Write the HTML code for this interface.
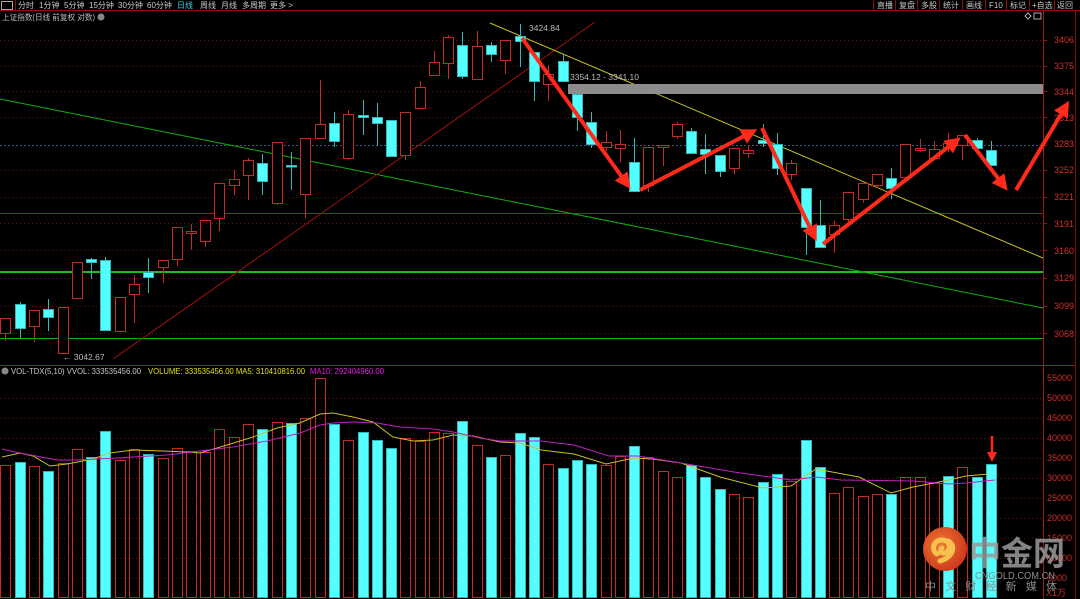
<!DOCTYPE html>
<html><head><meta charset="utf-8"><style>
html,body{margin:0;padding:0;background:#000;width:1080px;height:599px;overflow:hidden;font-family:"Liberation Sans","Noto Sans CJK SC",sans-serif}
svg{position:absolute;left:0;top:0}
</style></head><body>
<svg width="1080" height="599" viewBox="0 0 1080 599" xmlns="http://www.w3.org/2000/svg" font-family="Liberation Sans, Noto Sans CJK SC, sans-serif">
<rect width="1080" height="599" fill="#000"/>
<!-- toolbar -->
<line x1="0" y1="10.5" x2="1080" y2="10.5" stroke="#8a1010"/>
<rect x="1.5" y="1.5" width="11" height="8" fill="none" stroke="#aaa"/>
<line x1="15.5" y1="0" x2="15.5" y2="10" stroke="#8a1010"/>
<g font-size="8" fill="#c8c8c8">
<text x="18" y="8">分时</text><text x="39" y="8">1分钟</text><text x="64" y="8">5分钟</text><text x="89" y="8">15分钟</text><text x="118" y="8">30分钟</text><text x="147" y="8">60分钟</text><text x="177" y="8" fill="#40d0e0">日线</text><text x="200" y="8">周线</text><text x="221" y="8">月线</text><text x="242" y="8">多周期</text><text x="270" y="8">更多 &gt;</text>
<text x="877" y="8">直播</text><text x="899" y="8">复盘</text><text x="921" y="8">多股</text><text x="943" y="8">统计</text><text x="966" y="8">画线</text><text x="989" y="8">F10</text><text x="1010" y="8">标记</text><text x="1032" y="8">+自选</text><text x="1057" y="8">返回</text>
</g>
<g stroke="#8a1010"><line x1="873.5" y1="0" x2="873.5" y2="10"/><line x1="895.5" y1="0" x2="895.5" y2="10"/><line x1="917.5" y1="0" x2="917.5" y2="10"/><line x1="939.5" y1="0" x2="939.5" y2="10"/><line x1="962.5" y1="0" x2="962.5" y2="10"/><line x1="985.5" y1="0" x2="985.5" y2="10"/><line x1="1006.5" y1="0" x2="1006.5" y2="10"/><line x1="1029.5" y1="0" x2="1029.5" y2="10"/><line x1="1054.5" y1="0" x2="1054.5" y2="10"/></g>
<text x="2" y="20" font-size="8" fill="#bbb" textLength="93" lengthAdjust="spacingAndGlyphs">上证指数(日线 前复权 对数)</text>
<circle cx="101" cy="17" r="3.5" fill="#888"/>
<path d="M1025 16 l3 -3 l3 3 l-3 3z" fill="none" stroke="#aaa"/><rect x="1034" y="13" width="7" height="6" fill="none" stroke="#aaa"/>
<!-- axis lines -->
<line x1="1043.5" y1="11" x2="1043.5" y2="599" stroke="#a01818"/>
<line x1="1075.5" y1="11" x2="1075.5" y2="599" stroke="#7a1010"/>
<line x1="0" y1="365.5" x2="1075" y2="365.5" stroke="#a01818"/>
<!-- price grid -->
<g stroke="#5a1010" stroke-dasharray="1,3">
<line x1="0" y1="40.5" x2="1043" y2="40.5"/><line x1="0" y1="66.5" x2="1043" y2="66.5"/><line x1="0" y1="91.5" x2="1043" y2="91.5"/><line x1="0" y1="117.5" x2="1043" y2="117.5"/><line x1="0" y1="170.5" x2="1043" y2="170.5"/><line x1="0" y1="197.5" x2="1043" y2="197.5"/><line x1="0" y1="223.5" x2="1043" y2="223.5"/><line x1="0" y1="250.5" x2="1043" y2="250.5"/><line x1="0" y1="278.5" x2="1043" y2="278.5"/><line x1="0" y1="306.5" x2="1043" y2="306.5"/><line x1="0" y1="333.5" x2="1043" y2="333.5"/>
<line x1="0" y1="398.5" x2="1043" y2="398.5"/><line x1="0" y1="418.5" x2="1043" y2="418.5"/><line x1="0" y1="438.5" x2="1043" y2="438.5"/><line x1="0" y1="458.5" x2="1043" y2="458.5"/><line x1="0" y1="478.5" x2="1043" y2="478.5"/><line x1="0" y1="498.5" x2="1043" y2="498.5"/><line x1="0" y1="518.5" x2="1043" y2="518.5"/><line x1="0" y1="538.5" x2="1043" y2="538.5"/><line x1="0" y1="558.5" x2="1043" y2="558.5"/><line x1="0" y1="578.5" x2="1043" y2="578.5"/>
</g>
<line x1="0" y1="145.5" x2="1043" y2="145.5" stroke="#3a5a7a" stroke-dasharray="2,2"/>
<line x1="0" y1="213.5" x2="1043" y2="213.5" stroke="#a01818"/>
<line x1="0" y1="272" x2="1043" y2="272" stroke="#20ff20" stroke-width="1.6"/>
<line x1="0" y1="338.5" x2="1043" y2="338.5" stroke="#10b010"/>
<!-- axis labels -->
<g font-size="9" fill="#d03030">
<text x="1054" y="43">3406</text><text x="1054" y="69">3375</text><text x="1054" y="95">3344</text><text x="1054" y="121">3313</text><text x="1054" y="147">3283</text><text x="1054" y="173">3252</text><text x="1054" y="200">3221</text><text x="1054" y="227">3191</text><text x="1054" y="254">3160</text><text x="1054" y="281">3129</text><text x="1054" y="309">3099</text><text x="1054" y="337">3068</text>
<text x="1047" y="381">55000</text><text x="1047" y="401">50000</text><text x="1047" y="421">45000</text><text x="1047" y="441">40000</text><text x="1047" y="461">35000</text><text x="1047" y="481">30000</text><text x="1047" y="501">25000</text><text x="1047" y="521">20000</text><text x="1047" y="541">15000</text><text x="1047" y="561">10000</text><text x="1047" y="581">5000</text>
<text x="1046" y="596">X1万</text>
</g>
<g stroke="#a01818"><line x1="1043" y1="40.5" x2="1047" y2="40.5"/><line x1="1043" y1="66.5" x2="1047" y2="66.5"/><line x1="1043" y1="91.5" x2="1047" y2="91.5"/><line x1="1043" y1="117.5" x2="1047" y2="117.5"/><line x1="1043" y1="145.5" x2="1047" y2="145.5"/><line x1="1043" y1="170.5" x2="1047" y2="170.5"/><line x1="1043" y1="197.5" x2="1047" y2="197.5"/><line x1="1043" y1="223.5" x2="1047" y2="223.5"/><line x1="1043" y1="250.5" x2="1047" y2="250.5"/><line x1="1043" y1="278.5" x2="1047" y2="278.5"/><line x1="1043" y1="306.5" x2="1047" y2="306.5"/><line x1="1043" y1="333.5" x2="1047" y2="333.5"/></g>
<!-- trend lines -->
<line x1="0" y1="99" x2="1043" y2="308" stroke="#10b010"/>
<line x1="113" y1="359" x2="595" y2="22" stroke="#a01010"/>
<line x1="490" y1="23" x2="1043" y2="258" stroke="#c8c020"/>
<rect x="568" y="84" width="475" height="10" fill="#8c8c8c"/>
<g font-size="8.5" fill="#bbb"><text x="570" y="80">3354.12 - 3341.10</text><text x="529" y="31">3424.84</text><text x="63" y="360">← 3042.67</text></g>
<!-- candles -->
<g stroke-width="1">
<g stroke="#c82828" fill="#000">
<line x1="5.5" y1="318" x2="5.5" y2="341"/><rect x="0.5" y="318.5" width="10" height="15"/>
<line x1="34.5" y1="310" x2="34.5" y2="342"/><rect x="29.5" y="310.5" width="10" height="16"/>
<line x1="63.5" y1="307" x2="63.5" y2="353"/><rect x="58.5" y="307.5" width="10" height="46"/>
<rect x="72.5" y="262.5" width="10" height="36"/>
<rect x="115.5" y="297.5" width="10" height="34"/>
<line x1="134.5" y1="275" x2="134.5" y2="323"/><rect x="129.5" y="284.5" width="10" height="10"/>
<line x1="163.5" y1="260" x2="163.5" y2="283"/><rect x="158.5" y="260.5" width="10" height="7"/>
<line x1="177.5" y1="227" x2="177.5" y2="266"/><rect x="172.5" y="227.5" width="10" height="32"/>
<line x1="191.5" y1="224" x2="191.5" y2="250"/><rect x="186.5" y="231.5" width="10" height="2"/>
<line x1="205.5" y1="220" x2="205.5" y2="247"/><rect x="200.5" y="220.5" width="10" height="21"/>
<line x1="219.5" y1="183" x2="219.5" y2="231"/><rect x="214.5" y="183.5" width="10" height="35"/>
<line x1="234.5" y1="170" x2="234.5" y2="195"/><rect x="229.5" y="179.5" width="10" height="6"/>
<line x1="248.5" y1="158" x2="248.5" y2="200"/><rect x="243.5" y="160.5" width="10" height="15"/>
<line x1="277.5" y1="142" x2="277.5" y2="205"/><rect x="272.5" y="142.5" width="10" height="61"/>
<line x1="305.5" y1="138" x2="305.5" y2="218"/><rect x="300.5" y="138.5" width="10" height="56"/>
<line x1="320.5" y1="80" x2="320.5" y2="138"/><rect x="315.5" y="124.5" width="10" height="14"/>
<line x1="348.5" y1="110" x2="348.5" y2="160"/><rect x="343.5" y="114.5" width="10" height="44"/>
<line x1="405.5" y1="112" x2="405.5" y2="160"/><rect x="400.5" y="112.5" width="10" height="43"/>
<line x1="420.5" y1="81" x2="420.5" y2="108"/><rect x="415.5" y="87.5" width="10" height="21"/>
<line x1="434.5" y1="51" x2="434.5" y2="75"/><rect x="429.5" y="62.5" width="10" height="13"/>
<line x1="448.5" y1="35" x2="448.5" y2="79"/><rect x="443.5" y="37.5" width="10" height="26"/>
<line x1="477.5" y1="31" x2="477.5" y2="79"/><rect x="472.5" y="46.5" width="10" height="33"/>
<line x1="505.5" y1="40" x2="505.5" y2="74"/><rect x="500.5" y="40.5" width="10" height="20"/>
<line x1="548.5" y1="65" x2="548.5" y2="101"/><rect x="543.5" y="74.5" width="10" height="10"/>
<line x1="606.5" y1="131" x2="606.5" y2="151"/><rect x="601.5" y="142.5" width="10" height="5"/>
<line x1="620.5" y1="130" x2="620.5" y2="162"/><rect x="615.5" y="144.5" width="10" height="4"/>
<line x1="648.5" y1="147" x2="648.5" y2="192"/><rect x="643.5" y="147.5" width="10" height="38"/>
<line x1="663.5" y1="145" x2="663.5" y2="166"/><rect x="658.5" y="145.5" width="10" height="2"/>
<line x1="677.5" y1="122" x2="677.5" y2="139"/><rect x="672.5" y="124.5" width="10" height="12"/>
<line x1="734.5" y1="148" x2="734.5" y2="174"/><rect x="729.5" y="148.5" width="10" height="20"/>
<line x1="748.5" y1="145" x2="748.5" y2="158"/><rect x="743.5" y="150.5" width="10" height="3"/>
<line x1="791.5" y1="160" x2="791.5" y2="180"/><rect x="786.5" y="163.5" width="10" height="11"/>
<line x1="834.5" y1="221" x2="834.5" y2="253"/><rect x="829.5" y="225.5" width="10" height="9"/>
<line x1="848.5" y1="192" x2="848.5" y2="225"/><rect x="843.5" y="192.5" width="10" height="27"/>
<line x1="863.5" y1="183" x2="863.5" y2="203"/><rect x="858.5" y="183.5" width="10" height="16"/>
<line x1="877.5" y1="174" x2="877.5" y2="188"/><rect x="872.5" y="174.5" width="10" height="11"/>
<rect x="900.5" y="144.5" width="10" height="33"/>
<line x1="920.5" y1="139" x2="920.5" y2="152"/><rect x="915.5" y="148.5" width="10" height="2"/>
<line x1="934.5" y1="141" x2="934.5" y2="160"/><rect x="929.5" y="149.5" width="10" height="9"/>
<line x1="948.5" y1="133" x2="948.5" y2="152"/><rect x="943.5" y="143.5" width="10" height="4"/>
<line x1="962.5" y1="135" x2="962.5" y2="160"/><rect x="957.5" y="135.5" width="10" height="10"/>
</g>
<g stroke="#30b8b8" fill="#55ffff">
<line x1="20.5" y1="302" x2="20.5" y2="338"/><rect x="15.5" y="304.5" width="10" height="24"/>
<line x1="48.5" y1="299" x2="48.5" y2="331"/><rect x="43.5" y="309.5" width="10" height="8"/>
<line x1="91.5" y1="258" x2="91.5" y2="279"/><rect x="86.5" y="259.5" width="10" height="3"/>
<line x1="105.5" y1="257" x2="105.5" y2="330"/><rect x="100.5" y="260.5" width="10" height="70"/>
<line x1="148.5" y1="258" x2="148.5" y2="293"/><rect x="143.5" y="272.5" width="10" height="5"/>
<line x1="262.5" y1="154" x2="262.5" y2="195"/><rect x="257.5" y="163.5" width="10" height="18"/>
<line x1="291.5" y1="152" x2="291.5" y2="190"/><rect x="286.5" y="165.5" width="10" height="1.5"/>
<line x1="334.5" y1="112" x2="334.5" y2="147"/><rect x="329.5" y="123.5" width="10" height="18"/>
<line x1="363.5" y1="100" x2="363.5" y2="135"/><rect x="358.5" y="115.5" width="10" height="2"/>
<line x1="377.5" y1="103" x2="377.5" y2="146"/><rect x="372.5" y="117.5" width="10" height="6"/>
<rect x="386.5" y="120.5" width="10" height="36"/>
<line x1="462.5" y1="32" x2="462.5" y2="79"/><rect x="457.5" y="45.5" width="10" height="31"/>
<line x1="491.5" y1="42" x2="491.5" y2="62"/><rect x="486.5" y="45.5" width="10" height="9"/>
<line x1="520.5" y1="24" x2="520.5" y2="67"/><rect x="515.5" y="36.5" width="10" height="5"/>
<line x1="534.5" y1="52" x2="534.5" y2="101"/><rect x="529.5" y="52.5" width="10" height="29"/>
<line x1="563.5" y1="55" x2="563.5" y2="81"/><rect x="558.5" y="61.5" width="10" height="20"/>
<line x1="577.5" y1="94" x2="577.5" y2="131"/><rect x="572.5" y="94.5" width="10" height="23"/>
<line x1="591.5" y1="112" x2="591.5" y2="148"/><rect x="586.5" y="122.5" width="10" height="22"/>
<line x1="634.5" y1="138" x2="634.5" y2="191"/><rect x="629.5" y="162.5" width="10" height="29"/>
<line x1="691.5" y1="128" x2="691.5" y2="153"/><rect x="686.5" y="131.5" width="10" height="22"/>
<line x1="705.5" y1="134" x2="705.5" y2="174"/><rect x="700.5" y="149.5" width="10" height="5"/>
<line x1="720.5" y1="155" x2="720.5" y2="177"/><rect x="715.5" y="155.5" width="10" height="16"/>
<line x1="763.5" y1="124" x2="763.5" y2="147"/><rect x="758.5" y="140.5" width="10" height="3"/>
<line x1="777.5" y1="133" x2="777.5" y2="175"/><rect x="772.5" y="144.5" width="10" height="24"/>
<line x1="806.5" y1="188" x2="806.5" y2="255"/><rect x="801.5" y="188.5" width="10" height="39"/>
<line x1="820.5" y1="200" x2="820.5" y2="247"/><rect x="815.5" y="225.5" width="10" height="22"/>
<line x1="891.5" y1="168" x2="891.5" y2="199"/><rect x="886.5" y="178.5" width="10" height="10"/>
<line x1="977.5" y1="138" x2="977.5" y2="148"/><rect x="972.5" y="140.5" width="10" height="8"/>
<line x1="991.5" y1="141" x2="991.5" y2="165"/><rect x="986.5" y="150.5" width="10" height="15"/>
</g>
</g>
<!-- red arrows -->
<defs><marker id="ah" markerWidth="4" markerHeight="4" refX="2.5" refY="2" orient="auto" markerUnits="strokeWidth"><path d="M0 0 L4 2 L0 4z" fill="#ff2a1a"/></marker></defs>
<g stroke="#ff2a1a" stroke-width="4" fill="none" marker-end="url(#ah)">
<line x1="522" y1="38" x2="627" y2="184"/>
<line x1="640" y1="190" x2="752" y2="132"/>
<line x1="762" y1="128" x2="814" y2="236"/>
<line x1="823" y1="244" x2="956" y2="141"/>
<line x1="965" y1="135" x2="1004" y2="186"/>
<line x1="1016" y1="190" x2="1066" y2="106"/>
</g>
<!-- volume header -->
<circle cx="5" cy="371" r="3.5" fill="#888"/>
<g font-size="8"><text x="11" y="374" fill="#c8c8c8" textLength="130" lengthAdjust="spacingAndGlyphs">VOL-TDX(5,10) VVOL: 333535456.00</text><text x="148" y="374" fill="#e0e020" textLength="157" lengthAdjust="spacingAndGlyphs">VOLUME: 333535456.00  MA5: 310410816.00</text><text x="310" y="374" fill="#e020e0" textLength="74" lengthAdjust="spacingAndGlyphs">MA10: 292404960.00</text></g>
<!-- volume bars -->
<g stroke="#c82828" fill="none">
<rect x="0.5" y="465.5" width="10" height="132"/><rect x="29.5" y="466.5" width="10" height="131"/><rect x="58.5" y="463.5" width="10" height="134"/><rect x="72.5" y="449.5" width="10" height="148"/><rect x="115.5" y="460.5" width="10" height="137"/><rect x="129.5" y="449.5" width="10" height="148"/><rect x="158.5" y="458.5" width="10" height="139"/><rect x="172.5" y="448.5" width="10" height="149"/><rect x="186.5" y="451.5" width="10" height="146"/><rect x="200.5" y="452.5" width="10" height="145"/><rect x="214.5" y="429.5" width="10" height="168"/><rect x="229.5" y="437.5" width="10" height="160"/><rect x="243.5" y="424.5" width="10" height="173"/><rect x="272.5" y="422.5" width="10" height="175"/><rect x="300.5" y="418.5" width="10" height="179"/><rect x="315.5" y="378.5" width="10" height="219"/><rect x="343.5" y="440.5" width="10" height="157"/><rect x="400.5" y="438.5" width="10" height="159"/><rect x="415.5" y="441.5" width="10" height="156"/><rect x="429.5" y="432.5" width="10" height="165"/><rect x="443.5" y="433.5" width="10" height="164"/><rect x="472.5" y="445.5" width="10" height="152"/><rect x="500.5" y="455.5" width="10" height="142"/><rect x="543.5" y="464.5" width="10" height="133"/><rect x="601.5" y="465.5" width="10" height="132"/><rect x="615.5" y="456.5" width="10" height="141"/><rect x="643.5" y="457.5" width="10" height="140"/><rect x="658.5" y="471.5" width="10" height="126"/><rect x="672.5" y="477.5" width="10" height="120"/><rect x="729.5" y="494.5" width="10" height="103"/><rect x="743.5" y="497.5" width="10" height="100"/><rect x="786.5" y="481.5" width="10" height="116"/><rect x="829.5" y="493.5" width="10" height="104"/><rect x="843.5" y="487.5" width="10" height="110"/><rect x="858.5" y="496.5" width="10" height="101"/><rect x="872.5" y="494.5" width="10" height="103"/><rect x="900.5" y="477.5" width="10" height="120"/><rect x="915.5" y="477.5" width="10" height="120"/><rect x="929.5" y="483.5" width="10" height="114"/><rect x="957.5" y="467.5" width="10" height="130"/>
</g>
<g stroke="#30b8b8" fill="#55ffff">
<rect x="15.5" y="462.5" width="10" height="135"/><rect x="43.5" y="471.5" width="10" height="126"/><rect x="86.5" y="457.5" width="10" height="140"/><rect x="100.5" y="431.5" width="10" height="166"/><rect x="143.5" y="454.5" width="10" height="143"/><rect x="257.5" y="429.5" width="10" height="168"/><rect x="286.5" y="423.5" width="10" height="174"/><rect x="329.5" y="424.5" width="10" height="173"/><rect x="358.5" y="432.5" width="10" height="165"/><rect x="372.5" y="440.5" width="10" height="157"/><rect x="386.5" y="448.5" width="10" height="149"/><rect x="457.5" y="421.5" width="10" height="176"/><rect x="486.5" y="457.5" width="10" height="140"/><rect x="515.5" y="433.5" width="10" height="164"/><rect x="529.5" y="437.5" width="10" height="160"/><rect x="558.5" y="468.5" width="10" height="129"/><rect x="572.5" y="460.5" width="10" height="137"/><rect x="586.5" y="464.5" width="10" height="133"/><rect x="629.5" y="446.5" width="10" height="151"/><rect x="686.5" y="465.5" width="10" height="132"/><rect x="700.5" y="477.5" width="10" height="120"/><rect x="715.5" y="489.5" width="10" height="108"/><rect x="758.5" y="482.5" width="10" height="115"/><rect x="772.5" y="474.5" width="10" height="123"/><rect x="801.5" y="440.5" width="10" height="157"/><rect x="815.5" y="467.5" width="10" height="130"/><rect x="886.5" y="494.5" width="10" height="103"/><rect x="943.5" y="476.5" width="10" height="121"/><rect x="972.5" y="477.5" width="10" height="120"/><rect x="986.5" y="464.5" width="10" height="133"/>
</g>
<polyline fill="none" stroke="#c8c020" points="2,457 20,453 33,456 50,466 67,464 93,459 110,453 133,450 163,451 187,452 200,453 227,445 253,437 277,428 300,423 320,414 333,413 353,417 373,422 393,437 413,441 433,440 453,435 473,436 500,442 520,443 541,450 574,454 606,464 634,458 652,459 681,463 720,477 763,488 791,486 816,469 859,477 891,493 913,487 949,480 966,476 988,474"/>
<polyline fill="none" stroke="#c020c0" points="2,449 20,453 57,460 77,460 117,458 133,457 167,455 200,451 233,447 267,441 300,433 320,425 333,423 353,422 377,423 400,427 433,429 453,432 480,438 500,441 520,441 541,441 574,445 609,456 638,456 681,463 734,472 791,480 816,477 841,480 913,481 949,484 966,483 995,480"/>
<line x1="992" y1="436" x2="992" y2="454" stroke="#ff2a1a" stroke-width="2.5"/><path d="M987 452 L992 462 L997 452z" fill="#ff2a1a"/>
<!-- watermark -->
<defs><radialGradient id="lg" cx="0.4" cy="0.4" r="0.7"><stop offset="0" stop-color="#f07a30"/><stop offset="1" stop-color="#c8301a"/></radialGradient></defs>
<circle cx="945" cy="549" r="22" fill="url(#lg)"/>
<path d="M937 554 c-6 -4 -4 -14 5 -14 c8 0 10 10 3 13 c-4 1 -6 -3 -3 -5 M948 541 c8 4 6 16 -8 20" fill="none" stroke="#f8c050" stroke-width="5" stroke-linecap="round"/>
<text x="969" y="565" font-size="33" font-weight="bold" fill="#9a9a9a" opacity="0.85" textLength="96" lengthAdjust="spacingAndGlyphs" font-family="Noto Sans CJK SC, sans-serif">中金网</text>
<text x="975" y="579" font-size="10" fill="#8a8a8a" textLength="80" lengthAdjust="spacingAndGlyphs">CNGOLD.COM.CN</text>
<text x="925" y="590" font-size="11" fill="#8a8a8a" textLength="132" lengthAdjust="spacing" font-family="Noto Sans CJK SC, sans-serif">中文财经新媒体</text>
</svg>
</body></html>
